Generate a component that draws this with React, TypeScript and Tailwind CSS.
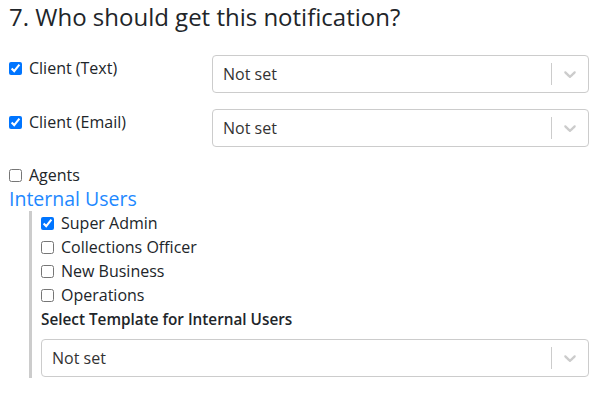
import { ReactNode } from "react";

const Chevron = () => (
  <svg width="20" height="20" viewBox="0 0 20 20" className="fill-[#cccccc]">
    <path d="M4.516 7.548c0.436-0.446 1.043-0.481 1.576 0l3.908 3.747 3.908-3.747c0.533-0.481 1.141-0.446 1.574 0 0.436 0.445 0.408 1.197 0 1.615-0.406 0.418-4.695 4.502-4.695 4.502-0.217 0.223-0.502 0.335-0.787 0.335s-0.57-0.112-0.789-0.335c0 0-4.287-4.084-4.695-4.502s-0.436-1.17 0-1.615z" />
  </svg>
);

const SelectBox = ({ className }: { className?: string }) => (
  <div
    className={`flex items-center h-[38px] rounded border border-[#cccccc] bg-white ${className ?? ""}`}
  >
    <div className="flex-1 px-[10px] text-[16px] text-[#333333]">Not set</div>
    <span className="w-px h-[22px] bg-[#cccccc]" />
    <div className="px-2 flex items-center">
      <Chevron />
    </div>
  </div>
);

const Check = ({ label, checked }: { label: ReactNode; checked?: boolean }) => (
  <label className="flex items-center gap-[7px] h-6 text-[16px] text-[#212529]">
    <input type="checkbox" defaultChecked={checked} className="w-[13px] h-[13px] m-0" />
    <span>{label}</span>
  </label>
);

export default function App() {
  return (
    <div
      className="w-[605px] h-[393px] bg-white pl-[9px] pr-[16px] text-[#212529]"
      style={{ fontFamily: "'Open Sans', 'Noto Sans', sans-serif" }}
    >
      <h2 className="text-[24px] leading-none pt-[5px] h-[55px]">
        7. Who should get this notification?
      </h2>

      <div className="flex items-start h-[54px]">
        <div className="w-[203px] pt-[1px]">
          <Check label="Client (Text)" checked />
        </div>
        <SelectBox className="flex-1" />
      </div>

      <div className="flex items-start h-[54px]">
        <div className="w-[203px] pt-[1px]">
          <Check label="Client (Email)" checked />
        </div>
        <SelectBox className="flex-1" />
      </div>

      <Check label="Agents" />
      <div className="text-[19.5px] leading-[24px] text-[#1e88ff]">Internal Users</div>

      <div className="ml-[20px] border-l-[3px] border-[#cccccc] pl-[9px] pb-[1px]">
        <Check label="Super Admin" checked />
        <Check label="Collections Officer" />
        <Check label="New Business" />
        <Check label="Operations" />
        <div className="text-[15.3px] font-semibold leading-[24px] mb-[8px]">
          Select Template for Internal Users
        </div>
        <SelectBox />
      </div>
    </div>
  );
}
